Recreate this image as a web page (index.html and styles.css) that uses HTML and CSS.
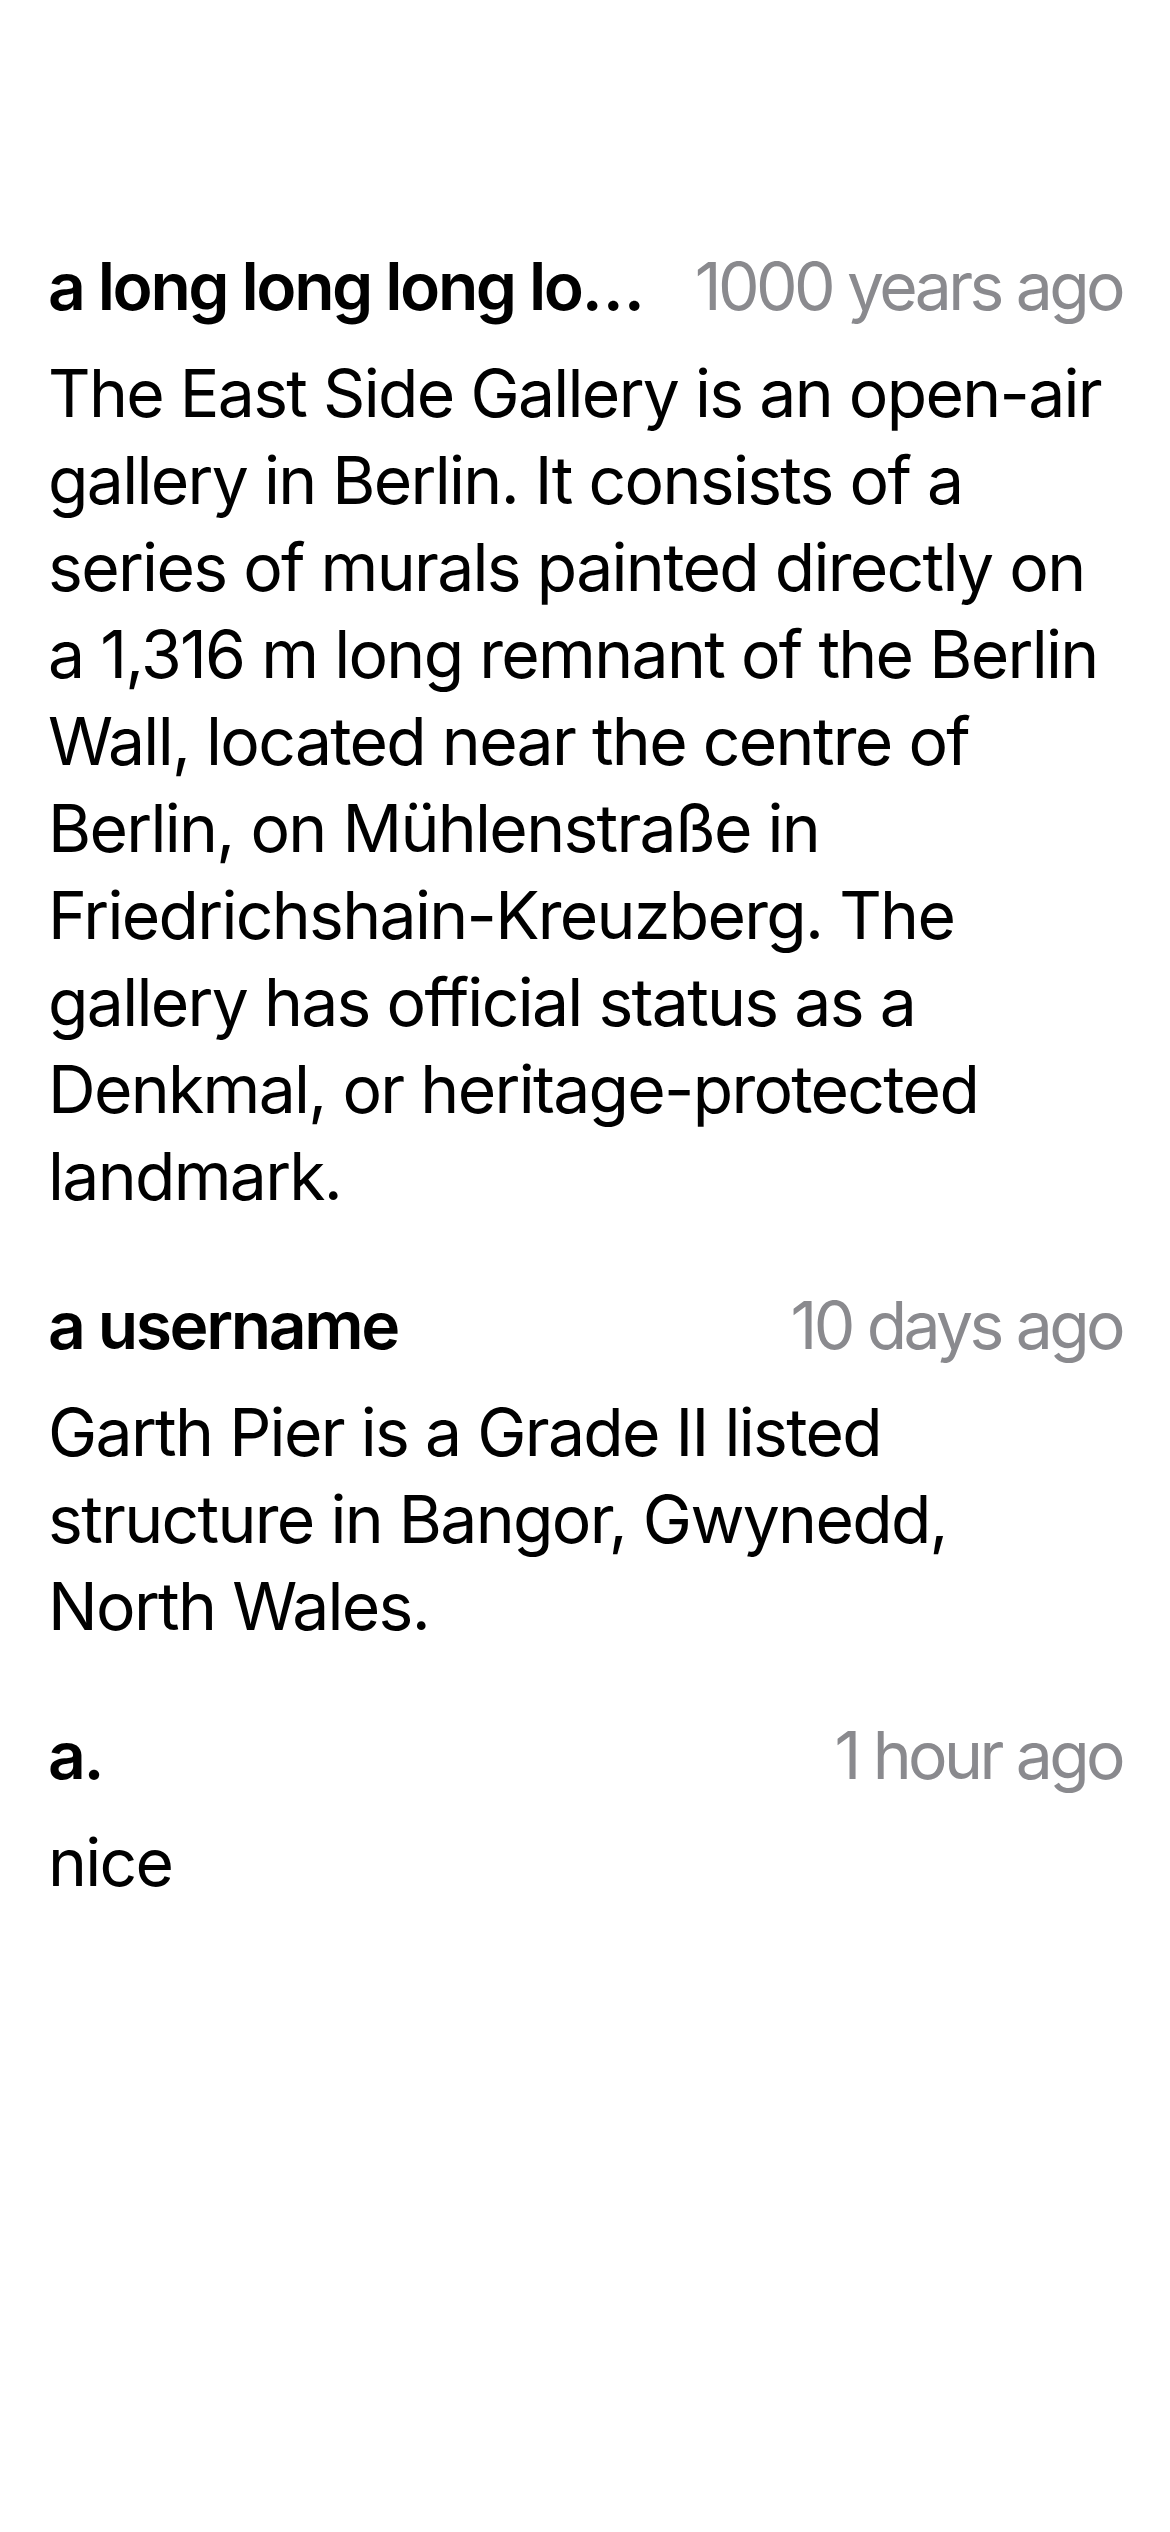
FILE: index.html
```html
<!DOCTYPE html>
<html lang="en">
<head>
<meta charset="utf-8">
<title>Comments</title>
<link rel="stylesheet" href="styles.css">
</head>
<body>
<main class="comments">
  <article class="comment">
    <header class="comment-head">
      <span class="author">a long long long lo…</span>
      <span class="time">1000 years ago</span>
    </header>
    <p class="text">The East Side Gallery is an open-air<br>gallery in Berlin. It consists of a<br>series of murals painted directly on<br>a 1,316 m long remnant of the Berlin<br>Wall, located near the centre of<br>Berlin, on Mühlenstraße in<br>Friedrichshain-Kreuzberg. The<br>gallery has official status as a<br>Denkmal, or heritage-protected<br>landmark.</p>
  </article>
  <article class="comment">
    <header class="comment-head">
      <span class="author">a username</span>
      <span class="time">10 days ago</span>
    </header>
    <p class="text">Garth Pier is a Grade II listed<br>structure in Bangor, Gwynedd,<br>North Wales.</p>
  </article>
  <article class="comment">
    <header class="comment-head">
      <span class="author">a.</span>
      <span class="time">1 hour ago</span>
    </header>
    <p class="text">nice</p>
  </article>
</main>
</body>
</html>
```

FILE: styles.css
```css
html, body {
  margin: 0;
  padding: 0;
  background: #ffffff;
}

body {
  font-family: Inter, "Noto Sans", "Liberation Sans", sans-serif;
  color: #000000;
  width: 1170px;
  min-height: 2532px;
}

.comments {
  padding: 243px 48px 0 48px;
  display: flex;
  flex-direction: column;
  gap: 62px;
}

.comment {
  display: flex;
  flex-direction: column;
  gap: 20px;
}

.comment-head {
  display: flex;
  justify-content: space-between;
  align-items: baseline;
  gap: 30px;
  font-size: 66px;
  line-height: 87px;
}

.author {
  font-weight: 600;
  white-space: nowrap;
  letter-spacing: -2.4px;
}

.time {
  color: #8a8a8e;
  white-space: nowrap;
  letter-spacing: -3.6px;
}

.text {
  margin: 0;
  font-size: 66px;
  line-height: 87px;
  letter-spacing: -1.7px;
  white-space: nowrap;
}
```
